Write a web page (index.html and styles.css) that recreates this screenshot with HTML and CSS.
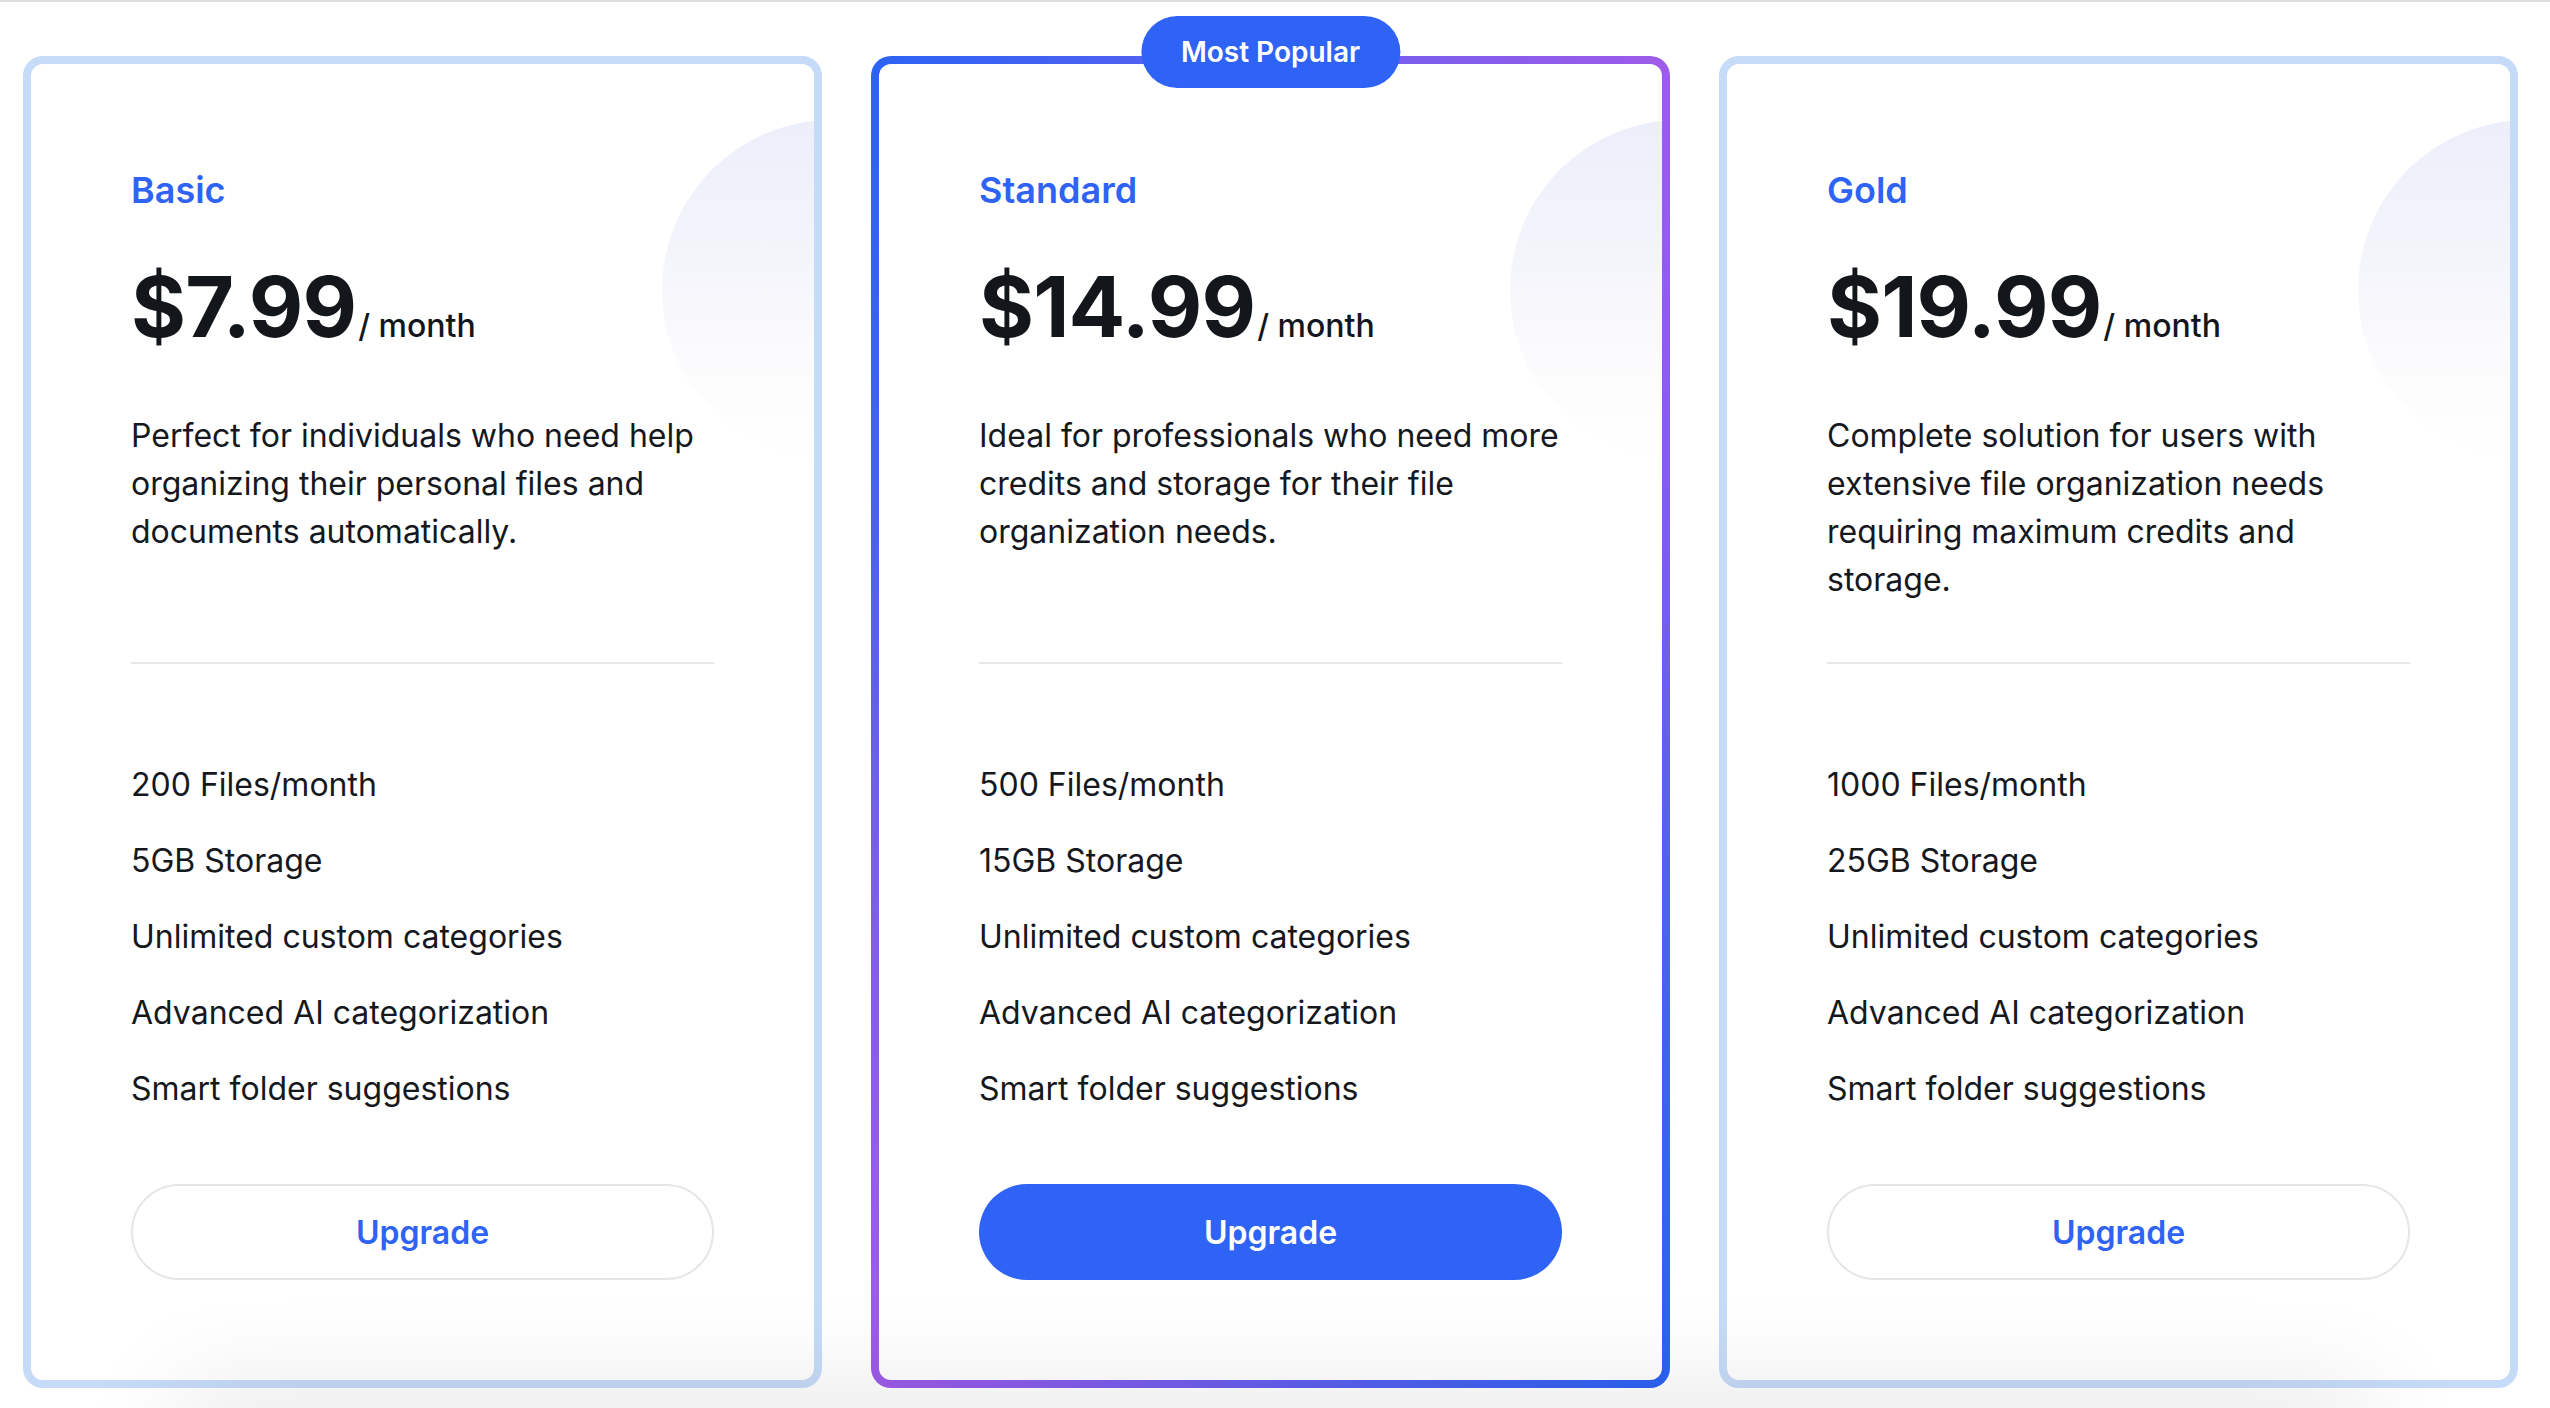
FILE: index.html
```html
<!DOCTYPE html>
<html lang="en">
<head>
<meta charset="utf-8">
<title>Pricing</title>
<link rel="stylesheet" href="styles.css">
</head>
<body>
<main class="plans">
  <section class="card">
    <div class="deco"><div class="circle"></div></div>
    <div class="content">
      <h2 class="plan-name">Basic</h2>
      <p class="price">$7.99<span class="per">/ month</span></p>
      <p class="desc">Perfect for individuals who need help organizing their personal files and documents automatically.</p>
      <hr class="divider">
      <ul class="features">
        <li>200 Files/month</li>
        <li>5GB Storage</li>
        <li>Unlimited custom categories</li>
        <li>Advanced AI categorization</li>
        <li>Smart folder suggestions</li>
      </ul>
      <button class="btn btn-outline">Upgrade</button>
    </div>
  </section>
  <section class="card card-popular">
    <div class="deco"><div class="circle"></div></div>
    <div class="badge">Most Popular</div>
    <div class="content">
      <h2 class="plan-name">Standard</h2>
      <p class="price">$14.99<span class="per">/ month</span></p>
      <p class="desc">Ideal for professionals who need more credits and storage for their file organization needs.</p>
      <hr class="divider">
      <ul class="features">
        <li>500 Files/month</li>
        <li>15GB Storage</li>
        <li>Unlimited custom categories</li>
        <li>Advanced AI categorization</li>
        <li>Smart folder suggestions</li>
      </ul>
      <button class="btn btn-filled">Upgrade</button>
    </div>
  </section>
  <section class="card">
    <div class="deco"><div class="circle"></div></div>
    <div class="content">
      <h2 class="plan-name">Gold</h2>
      <p class="price">$19.99<span class="per">/ month</span></p>
      <p class="desc">Complete solution for users with extensive file organization needs requiring maximum credits and storage.</p>
      <hr class="divider">
      <ul class="features">
        <li>1000 Files/month</li>
        <li>25GB Storage</li>
        <li>Unlimited custom categories</li>
        <li>Advanced AI categorization</li>
        <li>Smart folder suggestions</li>
      </ul>
      <button class="btn btn-outline">Upgrade</button>
    </div>
  </section>
</main>
<div class="bottom-fade"></div>
</body>
</html>
```
FILE: styles.css
```css
html, body {
  margin: 0;
  padding: 0;
  overflow: hidden;
}
body {
  background: #ffffff;
  border-top: 2px solid #dedede;
  font-family: Inter, "Noto Sans", "Liberation Sans", sans-serif;
  color: #15181d;
  height: 1406px;
}
.plans {
  display: grid;
  grid-template-columns: repeat(3, 799px);
  column-gap: 49px;
  padding: 54px 0 0 23px;
  align-items: start;
}
.card {
  position: relative;
  box-sizing: border-box;
  border: 8px solid #c6dbf8;
  border-radius: 20px;
  background: #ffffff;
}
.card-popular {
  border-color: transparent;
  background:
    linear-gradient(#ffffff, #ffffff) padding-box,
    conic-gradient(from -31deg, #2c63f4 0deg, #9e5be9 62deg, #2c63f4 180deg, #9e5be9 242deg, #2c63f4 360deg) border-box;
}
.deco {
  position: absolute;
  inset: 0;
  overflow: hidden;
  border-radius: 12px;
  pointer-events: none;
}
.circle {
  position: absolute;
  top: 56px;
  right: -188px;
  width: 340px;
  height: 340px;
  border-radius: 50%;
  background: linear-gradient(180deg, #eceefa 0%, #f4f5fb 40%, #fbfbfd 70%, rgba(255,255,255,0) 100%);
}
.badge {
  position: absolute;
  top: -48px;
  left: 50%;
  transform: translateX(-50%);
  height: 72px;
  line-height: 72px;
  padding: 0 40px;
  border-radius: 36px;
  background: #2f63f5;
  color: #ffffff;
  font-size: 28px;
  font-weight: 600;
  white-space: nowrap;
  z-index: 2;
}
.content {
  position: relative;
  z-index: 1;
  padding: 104px 100px 100px;
  display: flex;
  flex-direction: column;
}
.plan-name {
  margin: 0;
  font-size: 36px;
  line-height: 44px;
  font-weight: 600;
  color: #2f63f5;
}
.price {
  margin: 45px 0 0;
  font-size: 84px;
  line-height: 100px;
  font-weight: 700;
  letter-spacing: -0.01em;
  color: #13171b;
}
.per {
  font-size: 32px;
  line-height: 1;
  font-weight: 500;
  letter-spacing: 0;
  margin-left: 2px;
}
.desc {
  margin: 55px 0 0;
  font-size: 32px;
  line-height: 48px;
  min-height: 192px;
}
.divider {
  margin: 58px 0 0;
  border: 0;
  height: 2px;
  background: #e6e7eb;
}
.features {
  list-style: none;
  margin: 97px 0 0;
  padding: 0;
  display: flex;
  flex-direction: column;
  gap: 28px;
}
.features li {
  font-size: 32px;
  line-height: 48px;
}
.btn {
  margin-top: 71px;
  height: 96px;
  border-radius: 48px;
  font-family: inherit;
  font-size: 32px;
  font-weight: 600;
  display: flex;
  align-items: center;
  justify-content: center;
  box-sizing: border-box;
  cursor: pointer;
}
.btn-outline {
  background: #ffffff;
  border: 2px solid #e5e6ea;
  color: #2f63f5;
}
.btn-filled {
  background: #2f63f5;
  border: 0;
  color: #ffffff;
}
.bottom-fade {
  position: fixed;
  left: 180px;
  right: 180px;
  bottom: -40px;
  height: 40px;
  box-shadow: 0 0 110px 0 rgba(0, 0, 0, 0.2);
  pointer-events: none;
  z-index: 5;
}
```
